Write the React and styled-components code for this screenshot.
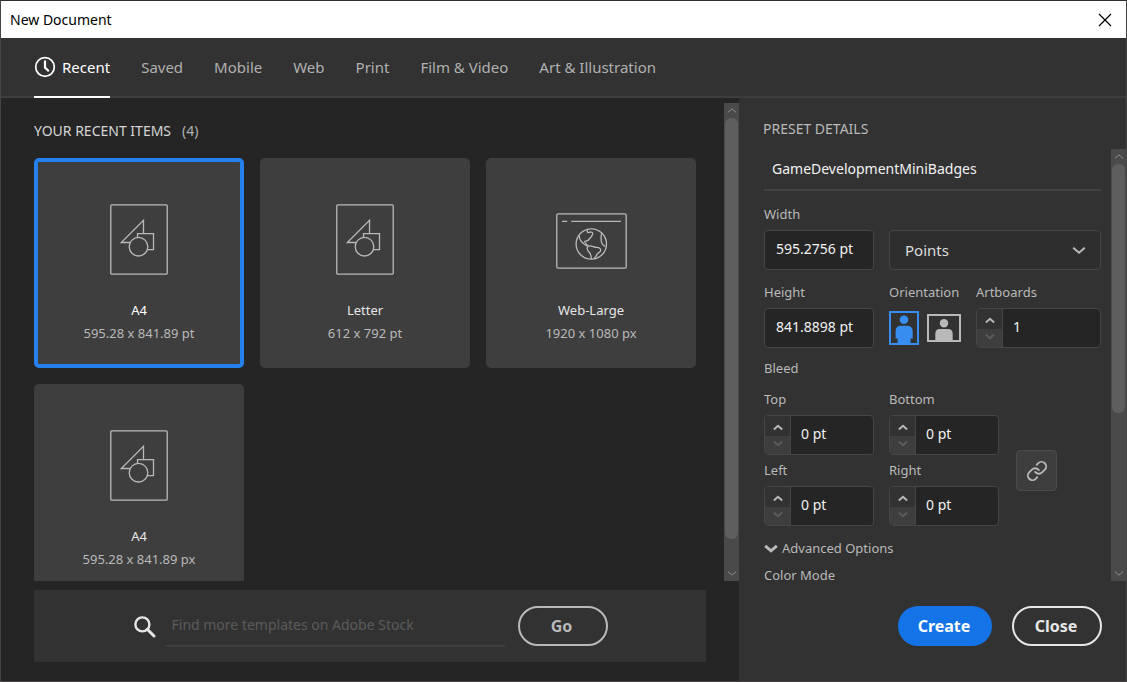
import React, { useState } from "react";
import styled, { createGlobalStyle } from "styled-components";
import { Link } from "lucide-react";

const GlobalStyle = createGlobalStyle`
  * { box-sizing: border-box; }
  html, body { margin: 0; background: #323232; }
  body, button, input, select { font-family: "Noto Sans", "Open Sans", sans-serif; }
  button { padding: 0; cursor: pointer; }
  svg { display: block; flex: none; }
`;

const Dialog = styled.div`
  display: flex;
  flex-direction: column;
  height: 100vh;
  border: 1px solid #454344;
  border-top-color: #2f2b2e;
  background: #323232;
  color: #b9b9b9;
`;

const TitleBar = styled.header`
  display: flex;
  align-items: center;
  justify-content: space-between;
  flex: none;
  height: 37px;
  padding: 0 14px 0 9px;
  background: #fff;
  color: #000;
`;

const Title = styled.h1`
  margin: 0;
  font-size: 14px;
  line-height: 20px;
  font-weight: 400;
`;

const IconButton = styled.button`
  border: 0;
  background: none;
  color: inherit;
`;

const Tabs = styled.nav`
  display: flex;
  flex: none;
  gap: 31px;
  height: 60px;
  padding: 0 33px;
  border-bottom: 2px solid #3e3e3e;
`;

const Tab = styled.button`
  display: flex;
  align-items: center;
  gap: 6px;
  height: 60px;
  padding-bottom: 1px;
  border: 0;
  border-bottom: 2px solid ${(p) => (p.$active ? "#fff" : "transparent")};
  background: none;
  color: ${(p) => (p.$active ? "#fff" : "#b0b0b0")};
  font-size: 15px;
  line-height: 20px;
`;

const Body = styled.div`
  display: flex;
  flex: 1;
  min-height: 0;
`;

const Main = styled.main`
  display: flex;
  flex-direction: column;
  flex: 1;
  min-width: 0;
  padding: 5px 0 19px 33px;
  background: #252525;
`;

const ScrollArea = styled.div`
  display: flex;
  flex: 1;
  min-height: 0;
`;

const ScrollContent = styled.div`
  flex: 1;
  min-width: 0;
  overflow: hidden;
`;

const ScrollTrack = styled.div`
  display: flex;
  flex-direction: column;
  align-items: center;
  flex: none;
  width: 15px;
  padding: 5px 1px;
  background: #4a4a4a;
  color: #8c8c8c;
`;

const ScrollBody = styled.div`
  flex: 1;
  width: 100%;
  padding: 5px 0;
`;

const ScrollThumb = styled.div`
  height: ${(p) => p.$size};
  border-radius: 6px;
  background: #5e5e5e;
`;

const SectionTitle = styled.h2`
  display: flex;
  gap: 11px;
  margin: 0;
  padding: 18px 0 17px;
  font-size: 14px;
  line-height: 20px;
  font-weight: 400;
  color: #d5d5d5;
`;

const Count = styled.span`
  color: #b0b0b0;
`;

const CardGrid = styled.div`
  display: grid;
  grid-template-columns: repeat(auto-fill, 210px);
  gap: 16px;
`;

const Card = styled.button`
  display: flex;
  flex-direction: column;
  align-items: center;
  height: 210px;
  border: 4px solid ${(p) => (p.$selected ? "#2680eb" : "#3e3e3e")};
  border-radius: 5px;
  background: #3e3e3e;
  color: #b9b9b9;
  font-size: 13px;
  line-height: 20px;
`;

const CardArt = styled.span`
  display: block;
  height: 71px;
  margin: 42px 0 25px;
`;

const CardName = styled.span`
  margin-bottom: 3px;
  color: ${(p) => (p.$selected ? "#fff" : "#e6e6e6")};
`;

const StockBar = styled.form`
  display: flex;
  align-items: center;
  justify-content: center;
  flex: none;
  height: 72px;
  margin: 9px 33px 0 0;
  background: #323232;
`;

const StockInput = styled.input`
  flex: 0 1 340px;
  min-width: 0;
  height: 42px;
  margin: 0 13px 0 8px;
  padding: 0 7px 2px;
  border: 0;
  border-bottom: 2px solid #3e3e3e;
  background: none;
  color: #e0e0e0;
  font-size: 14px;
  &::placeholder { color: #5b5b5b; opacity: 1; }
`;

const Pill = styled.button`
  height: 40px;
  padding: 0 2px 1px 0;
  border: ${(p) => (p.$primary ? "0" : "2px solid")};
  border-radius: 20px;
  min-width: ${(p) => (p.$primary ? "94px" : "90px")};
  background: ${(p) => (p.$primary ? "#1473e6" : "transparent")};
  color: ${(p) => (p.$primary ? "#fff" : p.$muted ? "#b9b9b9" : "#e6e6e6")};
  font-size: 16px;
  line-height: 20px;
  font-weight: 700;
`;

const Details = styled.aside`
  display: flex;
  flex-direction: column;
  flex: none;
  width: 387px;
  padding-left: 24px;
`;

const DetailsTitle = styled.h2`
  margin: 0;
  padding: 21px 0 10px;
  font-size: 14px;
  line-height: 20px;
  font-weight: 400;
`;

const DetailsForm = styled.form`
  flex: 1;
  min-width: 0;
  margin-bottom: -6px;
  padding: 0 10px 0 1px;
  overflow: hidden;
`;

const NameInput = styled.input`
  display: block;
  width: 100%;
  height: 42px;
  margin-bottom: 13px;
  padding: 0 8px 2px;
  border: 0;
  border-bottom: 2px solid #434343;
  background: none;
  color: #f2f2f2;
  font-size: 14px;
`;

const Row = styled.div`
  display: flex;
  gap: 15px;
  margin-bottom: ${(p) => p.$below || 0}px;
`;

const Field = styled.div`
  display: flex;
  flex-direction: column;
  flex: ${(p) => (p.$grow ? "1" : "none")};
  width: ${(p) => (p.$grow ? "auto" : "110px")};
  min-width: 0;
`;

const OrientationField = styled.fieldset`
  width: 72px;
  min-width: 0;
  margin: 0;
  padding: 0;
  border: 0;
`;

const fieldLabel = `
  display: block;
  height: 26px;
  padding: 0;
  font-size: 13px;
  line-height: 20px;
  white-space: nowrap;
`;

const Label = styled.label`${fieldLabel}`;
const Legend = styled.legend`${fieldLabel}`;

const TextInput = styled.input`
  width: 100%;
  height: 40px;
  padding: 0 11px 3px;
  border: 1px solid #464646;
  border-radius: 4px;
  background: #252525;
  color: #f2f2f2;
  font-size: 14px;
`;

const SelectBox = styled.div`
  display: grid;
  align-items: center;
  > * { grid-area: 1 / 1; }
  > svg { justify-self: end; margin-right: 15px; pointer-events: none; }
`;

const Select = styled.select`
  appearance: none;
  width: 100%;
  height: 40px;
  padding: 0 15px;
  border: 1px solid #464646;
  border-radius: 4px;
  background: #2e2e2e;
  color: #dcdcdc;
  font-size: 15px;
`;

const StepperBox = styled.div`
  display: flex;
  height: 40px;
  border: 1px solid #464646;
  border-radius: 4px;
  background: #252525;
  overflow: hidden;
`;

const StepButtons = styled.div`
  display: flex;
  flex-direction: column;
  flex: none;
  width: 26px;
  border-right: 1px solid #464646;
`;

const StepButton = styled.button`
  display: flex;
  align-items: center;
  justify-content: center;
  flex: 1;
  padding: ${(p) => (p.$dim ? "0 0 3px" : "4px 0 0")};
  border: 0;
  background: ${(p) => (p.$dim ? "#3e3e3e" : "#323232")};
  color: ${(p) => (p.$dim ? "#5c5c5c" : "#b9b9b9")};
`;

const StepInput = styled.input`
  flex: 1;
  min-width: 0;
  padding: 0 10px 3px;
  border: 0;
  background: none;
  color: #f2f2f2;
  font-size: 14px;
`;

const OrientationGroup = styled.div`
  display: flex;
  align-items: center;
  gap: 8px;
  height: 40px;
`;

const OrientationOption = styled.label`
  display: grid;
  color: ${(p) => (p.$active ? "#378ef0" : "#b9b9b9")};
  cursor: pointer;
  > * { grid-area: 1 / 1; }
  > input { width: 100%; height: 100%; margin: 0; opacity: 0; }
`;

const GroupTitle = styled.h3`
  margin: 0 0 11px;
  font-size: 13px;
  line-height: 20px;
  font-weight: 400;
`;

const BleedGrid = styled.div`
  display: grid;
  grid-template-columns: 110px 110px auto;
  justify-content: start;
  column-gap: 15px;
  row-gap: 5px;
  margin-bottom: 12px;
`;

const LinkCell = styled.div`
  display: flex;
  align-items: center;
  grid-area: 1 / 3 / 3 / 4;
  padding: 26px 0 0 2px;
`;

const LinkButton = styled.button`
  display: flex;
  align-items: center;
  justify-content: center;
  width: 41px;
  height: 41px;
  border: 1px solid #4b4b4b;
  border-radius: 4px;
  background: #3e3e3e;
  color: #b9b9b9;
`;

const Disclosure = styled.button`
  display: flex;
  align-items: center;
  gap: 4px;
  margin-bottom: 7px;
  border: 0;
  background: none;
  color: #b9b9b9;
  font-size: 13px;
  line-height: 20px;
`;

const Actions = styled.footer`
  display: flex;
  justify-content: flex-end;
  gap: 20px;
  flex: none;
  padding: 25px 24px 35px 0;
`;

const ClockIcon = () => (
  <svg width="22" height="22" viewBox="0 0 22 22" fill="none" stroke="currentColor">
    <circle cx="11" cy="11" r="9.3" strokeWidth="1.7" />
    <path d="M11 4.5V11.5L14.8 15.3" strokeWidth="2.2" />
  </svg>
);

const CloseIcon = () => (
  <svg width="14" height="14" viewBox="0 0 14 14" stroke="currentColor" strokeWidth="1.2">
    <path d="M1 1L13 13M13 1L1 13" />
  </svg>
);

const Chevron = ({ up, size = 14, weight = 2 }) => (
  <svg width={size} height={size / 2} viewBox="0 0 14 7" fill="none" stroke="currentColor" strokeWidth={(weight * 14) / size} overflow="visible">
    <path d={up ? "M1.2 6.2L7 1.2L12.8 6.2" : "M1.2 0.8L7 5.8L12.8 0.8"} />
  </svg>
);

const SearchIcon = () => (
  <svg width="24" height="24" viewBox="0 0 24 24" fill="none" stroke="#e6e6e6">
    <circle cx="9.4" cy="10.4" r="7" strokeWidth="2.4" />
    <path d="M14.3 15.3L21 22" strokeWidth="3" strokeLinecap="round" />
  </svg>
);

const DocumentArt = () => (
  <svg width="58" height="71" viewBox="0 0 58 71" fill="none" stroke="#b9b9b9" strokeWidth="1.3">
    <rect x="0.8" y="0.8" width="56.4" height="69.4" rx="1" />
    <path d="M20 38.5H11.3L33.5 16.3V29.5" />
    <path d="M27.5 33.4V29.7H43.5V45.7H37.6" />
    <circle cx="28.5" cy="42.7" r="9.3" />
  </svg>
);

const WebArt = () => (
  <svg width="71" height="71" viewBox="0 -9 71 71" fill="none" stroke="#b9b9b9" strokeWidth="1.3">
    <rect x="0.8" y="0.8" width="69.4" height="54.4" rx="1.5" />
    <path d="M6 8.3H11.3M15.3 8.3H65" />
    <circle cx="35.3" cy="31" r="15.2" />
    <path d="M23.4 22.3C22.6 26.4 26.6 30.6 31.6 33.4M31.8 16.3C30.4 18.6 31.6 20 33.2 19.4C35 18.5 37.3 19.3 36.6 21.2C36.2 23.6 34.2 24.4 33 26.4C31.8 28.6 29 27.2 28.4 29M28.4 29C30.2 29.6 30.6 32.4 32.6 33.2C35.6 31.8 37.6 34.6 41 34.4C43.6 34.4 45.6 36.4 44.2 38.4C43.2 40.4 40.6 40 40.6 42.2C40.4 43.6 39 44.4 38 45.6M31.8 33.6C30.6 35.4 31.4 37.2 32.6 38.6C35.2 40.2 35 43 35.4 46M46 20.4C44.2 22.4 45.6 25 45 27C45.4 29.6 46 32.6 49.6 33.4" />
  </svg>
);

const PortraitIcon = () => (
  <svg width="30" height="34" viewBox="0 0 30 34" fill="currentColor">
    <rect x="1" y="1" width="28" height="32" fill="none" stroke="currentColor" strokeWidth="2" />
    <circle cx="15" cy="8.7" r="4.3" />
    <path d="M12 14.7H18Q23.7 14.7 23.7 20.4V27.5H21.6V32.5H8.6V27.5H6.6V20.4Q6.6 14.7 12 14.7Z" />
  </svg>
);

const LandscapeIcon = () => (
  <svg width="34" height="28" viewBox="0 0 34 28" fill="currentColor">
    <rect x="1" y="1" width="32" height="26" fill="none" stroke="currentColor" strokeWidth="2" />
    <circle cx="17" cy="9.2" r="4.2" />
    <path d="M13 15H21Q25.7 15 25.7 20V26.5H8.3V20Q8.3 15 13 15Z" />
  </svg>
);

const Scrollbar = ({ size }) => (
  <ScrollTrack aria-hidden="true">
    <Chevron up size={10} weight={1} />
    <ScrollBody>
      <ScrollThumb $size={size} />
    </ScrollBody>
    <Chevron size={10} weight={1} />
  </ScrollTrack>
);

const Stepper = ({ id, label, initial, grow }) => (
  <Field $grow={grow}>
    <Label htmlFor={id}>{label}</Label>
    <StepperBox>
      <StepButtons>
        <StepButton type="button" aria-label={`Increase ${label}`}>
          <Chevron up size={10} />
        </StepButton>
        <StepButton type="button" $dim aria-label={`Decrease ${label}`}>
          <Chevron size={10} />
        </StepButton>
      </StepButtons>
      <StepInput id={id} defaultValue={initial} />
    </StepperBox>
  </Field>
);

const TABS = ["Recent", "Saved", "Mobile", "Web", "Print", "Film & Video", "Art & Illustration"];

const RECENT = [
  { name: "A4", size: "595.28 x 841.89 pt", Art: DocumentArt },
  { name: "Letter", size: "612 x 792 pt", Art: DocumentArt },
  { name: "Web-Large", size: "1920 x 1080 px", Art: WebArt },
  { name: "A4", size: "595.28 x 841.89 px", Art: DocumentArt },
];

export default function App() {
  const [tab, setTab] = useState("Recent");
  const [selected, setSelected] = useState(0);
  const [orientation, setOrientation] = useState("portrait");

  return (
    <>
      <GlobalStyle />
      <Dialog role="dialog" aria-labelledby="dialog-title">
        <TitleBar>
          <Title id="dialog-title">New Document</Title>
          <IconButton type="button" aria-label="Close window">
            <CloseIcon />
          </IconButton>
        </TitleBar>

        <Tabs>
          {TABS.map((name) => (
            <Tab key={name} type="button" $active={name === tab} onClick={() => setTab(name)}>
              {name === "Recent" && <ClockIcon />}
              {name}
            </Tab>
          ))}
        </Tabs>

        <Body>
          <Main>
            <ScrollArea>
              <ScrollContent>
                <SectionTitle>
                  YOUR RECENT ITEMS <Count>(4)</Count>
                </SectionTitle>
                <CardGrid>
                  {RECENT.map(({ name, size, Art }, i) => (
                    <Card key={i} type="button" $selected={i === selected} onClick={() => setSelected(i)}>
                      <CardArt>
                        <Art />
                      </CardArt>
                      <CardName $selected={i === selected}>{name}</CardName>
                      <span>{size}</span>
                    </Card>
                  ))}
                </CardGrid>
              </ScrollContent>
              <Scrollbar size="94%" />
            </ScrollArea>
            <StockBar onSubmit={(e) => e.preventDefault()}>
              <SearchIcon />
              <StockInput aria-label="Search Adobe Stock" placeholder="Find more templates on Adobe Stock" />
              <Pill $muted>Go</Pill>
            </StockBar>
          </Main>

          <Details>
            <DetailsTitle>PRESET DETAILS</DetailsTitle>
            <ScrollArea>
              <DetailsForm onSubmit={(e) => e.preventDefault()}>
                <NameInput aria-label="Document name" defaultValue="GameDevelopmentMiniBadges" />

                <Row $below={12}>
                  <Field>
                    <Label htmlFor="width">Width</Label>
                    <TextInput id="width" defaultValue="595.2756 pt" />
                  </Field>
                  <Field $grow>
                    <Label as="div" />
                    <SelectBox>
                      <Select aria-label="Units" defaultValue="Points">
                        <option>Points</option>
                        <option>Pixels</option>
                        <option>Inches</option>
                      </Select>
                      <Chevron />
                    </SelectBox>
                  </Field>
                </Row>

                <Row $below={10}>
                  <Field>
                    <Label htmlFor="height">Height</Label>
                    <TextInput id="height" defaultValue="841.8898 pt" />
                  </Field>
                  <OrientationField>
                    <Legend>Orientation</Legend>
                    <OrientationGroup>
                      <OrientationOption $active={orientation === "portrait"}>
                        <PortraitIcon />
                        <input
                          type="radio"
                          name="orientation"
                          aria-label="Portrait"
                          checked={orientation === "portrait"}
                          onChange={() => setOrientation("portrait")}
                        />
                      </OrientationOption>
                      <OrientationOption $active={orientation === "landscape"}>
                        <LandscapeIcon />
                        <input
                          type="radio"
                          name="orientation"
                          aria-label="Landscape"
                          checked={orientation === "landscape"}
                          onChange={() => setOrientation("landscape")}
                        />
                      </OrientationOption>
                    </OrientationGroup>
                  </OrientationField>
                  <Stepper id="artboards" label="Artboards" initial="1" grow />
                </Row>

                <GroupTitle>Bleed</GroupTitle>
                <BleedGrid>
                  <Stepper id="bleed-top" label="Top" initial="0 pt" />
                  <Stepper id="bleed-bottom" label="Bottom" initial="0 pt" />
                  <Stepper id="bleed-left" label="Left" initial="0 pt" />
                  <Stepper id="bleed-right" label="Right" initial="0 pt" />
                  <LinkCell>
                    <LinkButton type="button" aria-label="Link bleed values">
                      <Link size={22} strokeWidth={2} />
                    </LinkButton>
                  </LinkCell>
                </BleedGrid>

                <Disclosure type="button" aria-expanded="true">
                  <Chevron weight={3} />
                  Advanced Options
                </Disclosure>
                <Label as="div">Color Mode</Label>
              </DetailsForm>
              <Scrollbar size="62%" />
            </ScrollArea>
            <Actions>
              <Pill type="button" $primary>
                Create
              </Pill>
              <Pill type="button">Close</Pill>
            </Actions>
          </Details>
        </Body>
      </Dialog>
    </>
  );
}
